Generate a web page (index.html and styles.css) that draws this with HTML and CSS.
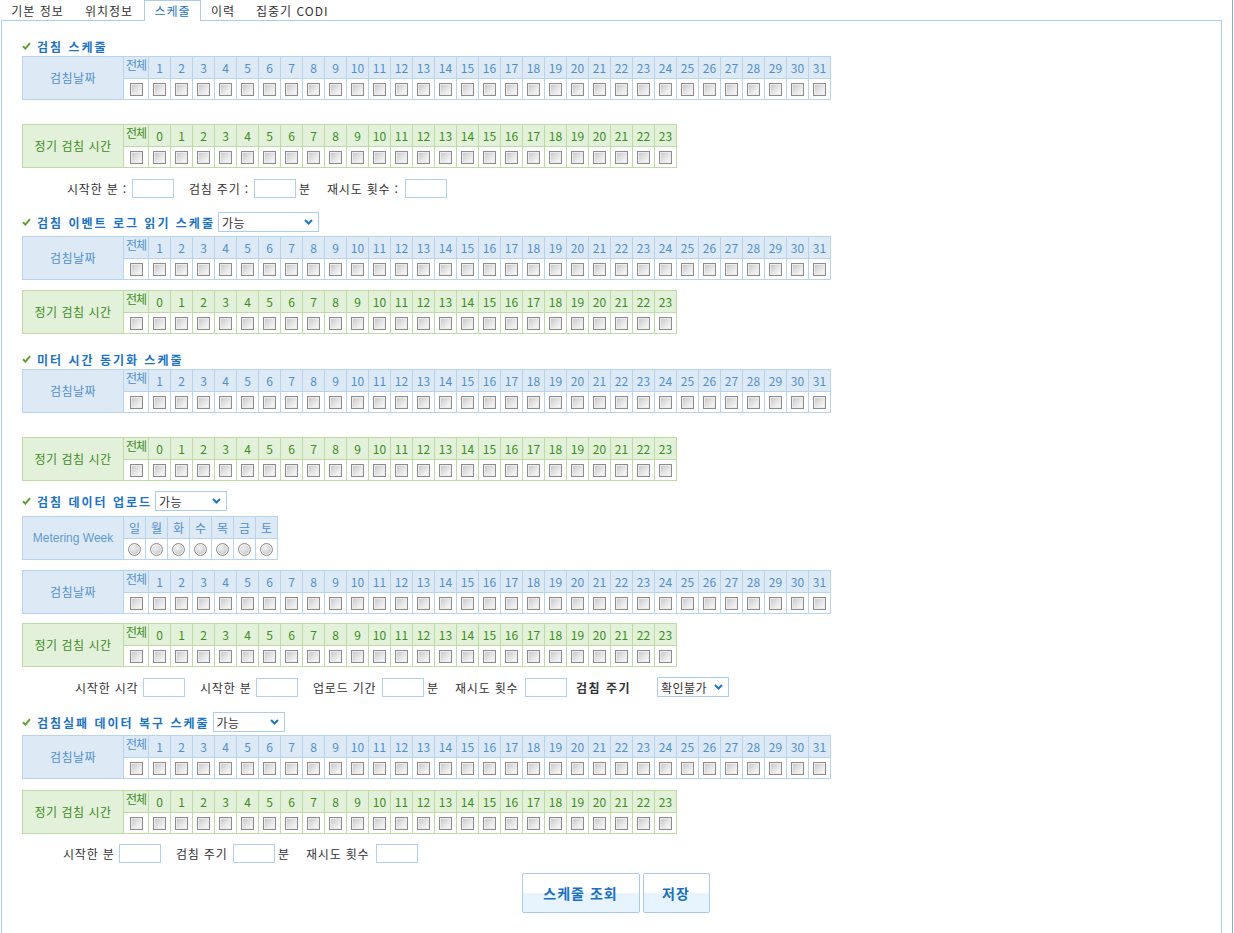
FILE: index.html
```html
<!DOCTYPE html>
<html lang="ko">
<head>
<meta charset="utf-8">
<title>스케줄</title>
<link rel="stylesheet" href="styles.css">
</head>
<body>
<div class="frame">
  <div class="tabs">
    <span class="tab t1">기본 정보</span>
    <span class="tab t2">위치정보</span>
    <span class="tab t3 active">스케줄</span>
    <span class="tab t4">이력</span>
    <span class="tab t5">집중기 CODI</span>
  </div>
  <div class="panel">

    <!-- 1 -->
    <div class="sec-title first"><svg class="chk" width="9" height="8" viewBox="0 0 9 8"><path d="M1 4.2 L3.4 6.6 L8 1.2" fill="none" stroke="#5f9e2c" stroke-width="2"/></svg><span>검침 스케줄</span></div>
    <table class="grid blue">
      <tr><th class="lab" rowspan="2">검침날짜</th><th class="all">전체</th><th>1</th><th>2</th><th>3</th><th>4</th><th>5</th><th>6</th><th>7</th><th>8</th><th>9</th><th>10</th><th>11</th><th>12</th><th>13</th><th>14</th><th>15</th><th>16</th><th>17</th><th>18</th><th>19</th><th>20</th><th>21</th><th>22</th><th>23</th><th>24</th><th>25</th><th>26</th><th>27</th><th>28</th><th>29</th><th>30</th><th>31</th></tr>
      <tr><td><input type="checkbox"></td><td><input type="checkbox"></td><td><input type="checkbox"></td><td><input type="checkbox"></td><td><input type="checkbox"></td><td><input type="checkbox"></td><td><input type="checkbox"></td><td><input type="checkbox"></td><td><input type="checkbox"></td><td><input type="checkbox"></td><td><input type="checkbox"></td><td><input type="checkbox"></td><td><input type="checkbox"></td><td><input type="checkbox"></td><td><input type="checkbox"></td><td><input type="checkbox"></td><td><input type="checkbox"></td><td><input type="checkbox"></td><td><input type="checkbox"></td><td><input type="checkbox"></td><td><input type="checkbox"></td><td><input type="checkbox"></td><td><input type="checkbox"></td><td><input type="checkbox"></td><td><input type="checkbox"></td><td><input type="checkbox"></td><td><input type="checkbox"></td><td><input type="checkbox"></td><td><input type="checkbox"></td><td><input type="checkbox"></td><td><input type="checkbox"></td><td><input type="checkbox"></td></tr>
    </table>
    <table class="grid green gap-24">
      <tr><th class="lab" rowspan="2">정기 검침 시간</th><th class="all">전체</th><th>0</th><th>1</th><th>2</th><th>3</th><th>4</th><th>5</th><th>6</th><th>7</th><th>8</th><th>9</th><th>10</th><th>11</th><th>12</th><th>13</th><th>14</th><th>15</th><th>16</th><th>17</th><th>18</th><th>19</th><th>20</th><th>21</th><th>22</th><th>23</th></tr>
      <tr><td><input type="checkbox"></td><td><input type="checkbox"></td><td><input type="checkbox"></td><td><input type="checkbox"></td><td><input type="checkbox"></td><td><input type="checkbox"></td><td><input type="checkbox"></td><td><input type="checkbox"></td><td><input type="checkbox"></td><td><input type="checkbox"></td><td><input type="checkbox"></td><td><input type="checkbox"></td><td><input type="checkbox"></td><td><input type="checkbox"></td><td><input type="checkbox"></td><td><input type="checkbox"></td><td><input type="checkbox"></td><td><input type="checkbox"></td><td><input type="checkbox"></td><td><input type="checkbox"></td><td><input type="checkbox"></td><td><input type="checkbox"></td><td><input type="checkbox"></td><td><input type="checkbox"></td><td><input type="checkbox"></td></tr>
    </table>
    <div class="fields f1 gap-10">
      <span class="lbl w65">시작한 분 :</span><input class="txt" type="text">
      <span class="lbl w65 sp">검침 주기 :</span><input class="txt" type="text"><span class="unit">분</span>
      <span class="lbl w78 sp">재시도 횟수 :</span><input class="txt" type="text">
    </div>

    <!-- 2 -->
    <div class="sec-title gap-14"><svg class="chk" width="9" height="8" viewBox="0 0 9 8"><path d="M1 4.2 L3.4 6.6 L8 1.2" fill="none" stroke="#5f9e2c" stroke-width="2"/></svg><span>검침 이벤트 로그 읽기 스케줄</span><span class="sel w101"><span>가능</span><svg width="9" height="6" viewBox="0 0 9 6"><path d="M1 1 L4.5 4.5 L8 1" fill="none" stroke="#1d74c8" stroke-width="2"/></svg></span></div>
    <table class="grid blue gap-4">
      <tr><th class="lab" rowspan="2">검침날짜</th><th class="all">전체</th><th>1</th><th>2</th><th>3</th><th>4</th><th>5</th><th>6</th><th>7</th><th>8</th><th>9</th><th>10</th><th>11</th><th>12</th><th>13</th><th>14</th><th>15</th><th>16</th><th>17</th><th>18</th><th>19</th><th>20</th><th>21</th><th>22</th><th>23</th><th>24</th><th>25</th><th>26</th><th>27</th><th>28</th><th>29</th><th>30</th><th>31</th></tr>
      <tr><td><input type="checkbox"></td><td><input type="checkbox"></td><td><input type="checkbox"></td><td><input type="checkbox"></td><td><input type="checkbox"></td><td><input type="checkbox"></td><td><input type="checkbox"></td><td><input type="checkbox"></td><td><input type="checkbox"></td><td><input type="checkbox"></td><td><input type="checkbox"></td><td><input type="checkbox"></td><td><input type="checkbox"></td><td><input type="checkbox"></td><td><input type="checkbox"></td><td><input type="checkbox"></td><td><input type="checkbox"></td><td><input type="checkbox"></td><td><input type="checkbox"></td><td><input type="checkbox"></td><td><input type="checkbox"></td><td><input type="checkbox"></td><td><input type="checkbox"></td><td><input type="checkbox"></td><td><input type="checkbox"></td><td><input type="checkbox"></td><td><input type="checkbox"></td><td><input type="checkbox"></td><td><input type="checkbox"></td><td><input type="checkbox"></td><td><input type="checkbox"></td><td><input type="checkbox"></td></tr>
    </table>
    <table class="grid green gap-10">
      <tr><th class="lab" rowspan="2">정기 검침 시간</th><th class="all">전체</th><th>0</th><th>1</th><th>2</th><th>3</th><th>4</th><th>5</th><th>6</th><th>7</th><th>8</th><th>9</th><th>10</th><th>11</th><th>12</th><th>13</th><th>14</th><th>15</th><th>16</th><th>17</th><th>18</th><th>19</th><th>20</th><th>21</th><th>22</th><th>23</th></tr>
      <tr><td><input type="checkbox"></td><td><input type="checkbox"></td><td><input type="checkbox"></td><td><input type="checkbox"></td><td><input type="checkbox"></td><td><input type="checkbox"></td><td><input type="checkbox"></td><td><input type="checkbox"></td><td><input type="checkbox"></td><td><input type="checkbox"></td><td><input type="checkbox"></td><td><input type="checkbox"></td><td><input type="checkbox"></td><td><input type="checkbox"></td><td><input type="checkbox"></td><td><input type="checkbox"></td><td><input type="checkbox"></td><td><input type="checkbox"></td><td><input type="checkbox"></td><td><input type="checkbox"></td><td><input type="checkbox"></td><td><input type="checkbox"></td><td><input type="checkbox"></td><td><input type="checkbox"></td><td><input type="checkbox"></td></tr>
    </table>

    <!-- 3 -->
    <div class="sec-title gap-15"><svg class="chk" width="9" height="8" viewBox="0 0 9 8"><path d="M1 4.2 L3.4 6.6 L8 1.2" fill="none" stroke="#5f9e2c" stroke-width="2"/></svg><span>미터 시간 동기화 스케줄</span></div>
    <table class="grid blue">
      <tr><th class="lab" rowspan="2">검침날짜</th><th class="all">전체</th><th>1</th><th>2</th><th>3</th><th>4</th><th>5</th><th>6</th><th>7</th><th>8</th><th>9</th><th>10</th><th>11</th><th>12</th><th>13</th><th>14</th><th>15</th><th>16</th><th>17</th><th>18</th><th>19</th><th>20</th><th>21</th><th>22</th><th>23</th><th>24</th><th>25</th><th>26</th><th>27</th><th>28</th><th>29</th><th>30</th><th>31</th></tr>
      <tr><td><input type="checkbox"></td><td><input type="checkbox"></td><td><input type="checkbox"></td><td><input type="checkbox"></td><td><input type="checkbox"></td><td><input type="checkbox"></td><td><input type="checkbox"></td><td><input type="checkbox"></td><td><input type="checkbox"></td><td><input type="checkbox"></td><td><input type="checkbox"></td><td><input type="checkbox"></td><td><input type="checkbox"></td><td><input type="checkbox"></td><td><input type="checkbox"></td><td><input type="checkbox"></td><td><input type="checkbox"></td><td><input type="checkbox"></td><td><input type="checkbox"></td><td><input type="checkbox"></td><td><input type="checkbox"></td><td><input type="checkbox"></td><td><input type="checkbox"></td><td><input type="checkbox"></td><td><input type="checkbox"></td><td><input type="checkbox"></td><td><input type="checkbox"></td><td><input type="checkbox"></td><td><input type="checkbox"></td><td><input type="checkbox"></td><td><input type="checkbox"></td><td><input type="checkbox"></td></tr>
    </table>
    <table class="grid green gap-24">
      <tr><th class="lab" rowspan="2">정기 검침 시간</th><th class="all">전체</th><th>0</th><th>1</th><th>2</th><th>3</th><th>4</th><th>5</th><th>6</th><th>7</th><th>8</th><th>9</th><th>10</th><th>11</th><th>12</th><th>13</th><th>14</th><th>15</th><th>16</th><th>17</th><th>18</th><th>19</th><th>20</th><th>21</th><th>22</th><th>23</th></tr>
      <tr><td><input type="checkbox"></td><td><input type="checkbox"></td><td><input type="checkbox"></td><td><input type="checkbox"></td><td><input type="checkbox"></td><td><input type="checkbox"></td><td><input type="checkbox"></td><td><input type="checkbox"></td><td><input type="checkbox"></td><td><input type="checkbox"></td><td><input type="checkbox"></td><td><input type="checkbox"></td><td><input type="checkbox"></td><td><input type="checkbox"></td><td><input type="checkbox"></td><td><input type="checkbox"></td><td><input type="checkbox"></td><td><input type="checkbox"></td><td><input type="checkbox"></td><td><input type="checkbox"></td><td><input type="checkbox"></td><td><input type="checkbox"></td><td><input type="checkbox"></td><td><input type="checkbox"></td><td><input type="checkbox"></td></tr>
    </table>

    <!-- 4 -->
    <div class="sec-title gap-10"><svg class="chk" width="9" height="8" viewBox="0 0 9 8"><path d="M1 4.2 L3.4 6.6 L8 1.2" fill="none" stroke="#5f9e2c" stroke-width="2"/></svg><span>검침 데이터 업로드</span><span class="sel w72"><span>가능</span><svg width="9" height="6" viewBox="0 0 9 6"><path d="M1 1 L4.5 4.5 L8 1" fill="none" stroke="#1d74c8" stroke-width="2"/></svg></span></div>
    <table class="grid blue week gap-5">
      <tr><th class="lab wk" rowspan="2">Metering Week</th><th>일</th><th>월</th><th>화</th><th>수</th><th>목</th><th>금</th><th>토</th></tr>
      <tr><td><input type="radio" name="wk"></td><td><input type="radio" name="wk"></td><td><input type="radio" name="wk"></td><td><input type="radio" name="wk"></td><td><input type="radio" name="wk"></td><td><input type="radio" name="wk"></td><td><input type="radio" name="wk"></td></tr>
    </table>
    <table class="grid blue gap-10">
      <tr><th class="lab" rowspan="2">검침날짜</th><th class="all">전체</th><th>1</th><th>2</th><th>3</th><th>4</th><th>5</th><th>6</th><th>7</th><th>8</th><th>9</th><th>10</th><th>11</th><th>12</th><th>13</th><th>14</th><th>15</th><th>16</th><th>17</th><th>18</th><th>19</th><th>20</th><th>21</th><th>22</th><th>23</th><th>24</th><th>25</th><th>26</th><th>27</th><th>28</th><th>29</th><th>30</th><th>31</th></tr>
      <tr><td><input type="checkbox"></td><td><input type="checkbox"></td><td><input type="checkbox"></td><td><input type="checkbox"></td><td><input type="checkbox"></td><td><input type="checkbox"></td><td><input type="checkbox"></td><td><input type="checkbox"></td><td><input type="checkbox"></td><td><input type="checkbox"></td><td><input type="checkbox"></td><td><input type="checkbox"></td><td><input type="checkbox"></td><td><input type="checkbox"></td><td><input type="checkbox"></td><td><input type="checkbox"></td><td><input type="checkbox"></td><td><input type="checkbox"></td><td><input type="checkbox"></td><td><input type="checkbox"></td><td><input type="checkbox"></td><td><input type="checkbox"></td><td><input type="checkbox"></td><td><input type="checkbox"></td><td><input type="checkbox"></td><td><input type="checkbox"></td><td><input type="checkbox"></td><td><input type="checkbox"></td><td><input type="checkbox"></td><td><input type="checkbox"></td><td><input type="checkbox"></td><td><input type="checkbox"></td></tr>
    </table>
    <table class="grid green gap-9">
      <tr><th class="lab" rowspan="2">정기 검침 시간</th><th class="all">전체</th><th>0</th><th>1</th><th>2</th><th>3</th><th>4</th><th>5</th><th>6</th><th>7</th><th>8</th><th>9</th><th>10</th><th>11</th><th>12</th><th>13</th><th>14</th><th>15</th><th>16</th><th>17</th><th>18</th><th>19</th><th>20</th><th>21</th><th>22</th><th>23</th></tr>
      <tr><td><input type="checkbox"></td><td><input type="checkbox"></td><td><input type="checkbox"></td><td><input type="checkbox"></td><td><input type="checkbox"></td><td><input type="checkbox"></td><td><input type="checkbox"></td><td><input type="checkbox"></td><td><input type="checkbox"></td><td><input type="checkbox"></td><td><input type="checkbox"></td><td><input type="checkbox"></td><td><input type="checkbox"></td><td><input type="checkbox"></td><td><input type="checkbox"></td><td><input type="checkbox"></td><td><input type="checkbox"></td><td><input type="checkbox"></td><td><input type="checkbox"></td><td><input type="checkbox"></td><td><input type="checkbox"></td><td><input type="checkbox"></td><td><input type="checkbox"></td><td><input type="checkbox"></td><td><input type="checkbox"></td></tr>
    </table>
    <div class="fields f4 gap-10">
      <span class="lbl w68">시작한 시각</span><input class="txt" type="text">
      <span class="lbl w56 sp">시작한 분</span><input class="txt" type="text">
      <span class="lbl w69 sp">업로드 기간</span><input class="txt" type="text"><span class="unit">분</span>
      <span class="lbl w70 sp">재시도 횟수</span><input class="txt" type="text">
      <span class="lbl w81 sp-s strong">검침 주기</span><span class="sel w72"><span>확인불가</span><svg width="9" height="6" viewBox="0 0 9 6"><path d="M1 1 L4.5 4.5 L8 1" fill="none" stroke="#1d74c8" stroke-width="2"/></svg></span>
    </div>

    <!-- 5 -->
    <div class="sec-title gap-15"><svg class="chk" width="9" height="8" viewBox="0 0 9 8"><path d="M1 4.2 L3.4 6.6 L8 1.2" fill="none" stroke="#5f9e2c" stroke-width="2"/></svg><span>검침실패 데이터 복구 스케줄</span><span class="sel w72"><span>가능</span><svg width="9" height="6" viewBox="0 0 9 6"><path d="M1 1 L4.5 4.5 L8 1" fill="none" stroke="#1d74c8" stroke-width="2"/></svg></span></div>
    <table class="grid blue gap-3">
      <tr><th class="lab" rowspan="2">검침날짜</th><th class="all">전체</th><th>1</th><th>2</th><th>3</th><th>4</th><th>5</th><th>6</th><th>7</th><th>8</th><th>9</th><th>10</th><th>11</th><th>12</th><th>13</th><th>14</th><th>15</th><th>16</th><th>17</th><th>18</th><th>19</th><th>20</th><th>21</th><th>22</th><th>23</th><th>24</th><th>25</th><th>26</th><th>27</th><th>28</th><th>29</th><th>30</th><th>31</th></tr>
      <tr><td><input type="checkbox"></td><td><input type="checkbox"></td><td><input type="checkbox"></td><td><input type="checkbox"></td><td><input type="checkbox"></td><td><input type="checkbox"></td><td><input type="checkbox"></td><td><input type="checkbox"></td><td><input type="checkbox"></td><td><input type="checkbox"></td><td><input type="checkbox"></td><td><input type="checkbox"></td><td><input type="checkbox"></td><td><input type="checkbox"></td><td><input type="checkbox"></td><td><input type="checkbox"></td><td><input type="checkbox"></td><td><input type="checkbox"></td><td><input type="checkbox"></td><td><input type="checkbox"></td><td><input type="checkbox"></td><td><input type="checkbox"></td><td><input type="checkbox"></td><td><input type="checkbox"></td><td><input type="checkbox"></td><td><input type="checkbox"></td><td><input type="checkbox"></td><td><input type="checkbox"></td><td><input type="checkbox"></td><td><input type="checkbox"></td><td><input type="checkbox"></td><td><input type="checkbox"></td></tr>
    </table>
    <table class="grid green gap-11">
      <tr><th class="lab" rowspan="2">정기 검침 시간</th><th class="all">전체</th><th>0</th><th>1</th><th>2</th><th>3</th><th>4</th><th>5</th><th>6</th><th>7</th><th>8</th><th>9</th><th>10</th><th>11</th><th>12</th><th>13</th><th>14</th><th>15</th><th>16</th><th>17</th><th>18</th><th>19</th><th>20</th><th>21</th><th>22</th><th>23</th></tr>
      <tr><td><input type="checkbox"></td><td><input type="checkbox"></td><td><input type="checkbox"></td><td><input type="checkbox"></td><td><input type="checkbox"></td><td><input type="checkbox"></td><td><input type="checkbox"></td><td><input type="checkbox"></td><td><input type="checkbox"></td><td><input type="checkbox"></td><td><input type="checkbox"></td><td><input type="checkbox"></td><td><input type="checkbox"></td><td><input type="checkbox"></td><td><input type="checkbox"></td><td><input type="checkbox"></td><td><input type="checkbox"></td><td><input type="checkbox"></td><td><input type="checkbox"></td><td><input type="checkbox"></td><td><input type="checkbox"></td><td><input type="checkbox"></td><td><input type="checkbox"></td><td><input type="checkbox"></td><td><input type="checkbox"></td></tr>
    </table>
    <div class="fields f5 gap-9">
      <span class="lbl w56">시작한 분</span><input class="txt" type="text">
      <span class="lbl w57 sp">검침 주기</span><input class="txt" type="text"><span class="unit">분</span>
      <span class="lbl w70 sp">재시도 횟수</span><input class="txt" type="text">
    </div>

    <div class="buttons gap-10">
      <button class="btn wide" type="button">스케줄 조회</button>
      <button class="btn" type="button">저장</button>
    </div>
  </div>
</div>
</body>
</html>
```
FILE: styles.css
```css
html, body {
  margin: 0;
  padding: 0;
  background: #fff;
}
body {
  font-family: "Noto Sans CJK KR", "Liberation Sans", sans-serif;
  font-size: 12px;
  color: #333;
  overflow: hidden;
}
.frame {
  width: 1232px;
  height: 933px;
  border-right: 1px solid #7db2e6;
}

/* tabs */
.tabs {
  display: flex;
  height: 20px;
  padding-left: 1px;
}
.tab {
  box-sizing: border-box;
  height: 20px;
  line-height: 21px;
  text-align: center;
  white-space: nowrap;
  color: #333;
  letter-spacing: 1px;
}
.tab.t1 { width: 73px; }
.tab.t2 { width: 70px; }
.tab.t3 { width: 57px; }
.tab.t4 { width: 44px; }
.tab.t5 { padding-left: 11px; text-align: left; }
.tab.active {
  height: 21px;
  margin-bottom: -1px;
  border: 1px solid #a9cdea;
  border-bottom: none;
  background: #fff;
  color: #1c72c4;
  line-height: 20px;
  position: relative;
  z-index: 1;
}

/* panel */
.panel {
  margin-left: 1px;
  width: 1221px;
  height: 1000px;
  box-sizing: border-box;
  border: 1px solid #a9cdea;
  padding: 15px 20px 0 20px;
}

.sec-title {
  display: flex;
  align-items: center;
  height: 20px;
  font-weight: bold;
  color: #1c72c4;
  white-space: nowrap;
}
.sec-title > span:not(.sel) {
  letter-spacing: 2px;
}
.sec-title .chk {
  margin-right: 6px;
  flex: none;
}
.sec-title .sel {
  margin-left: 3px;
  font-weight: normal;
}

/* fake selects */
.sel {
  display: inline-flex;
  align-items: center;
  justify-content: space-between;
  height: 20px;
  box-sizing: border-box;
  border: 1px solid #a9cdea;
  background: #fff;
  padding: 0 5px 0 3px;
  color: #333;
  font-weight: normal;
  letter-spacing: 0.5px;
}
.sel.w101 { width: 101px; }
.sel.w72 { width: 72px; }

/* grids */
.grid {
  border-collapse: separate;
  border-spacing: 0;
  table-layout: fixed;
  border-top: 1px solid;
  border-left: 1px solid;
}
.grid th, .grid td {
  box-sizing: border-box;
  padding: 0;
  width: 22px;
  border-right: 1px solid;
  border-bottom: 1px solid;
  text-align: center;
  font-weight: normal;
  white-space: nowrap;
  overflow: hidden;
}
.grid th {
  height: 22px;
  line-height: 18px;
  vertical-align: middle;
}
.grid td {
  height: 21px;
  background: #fff;
  vertical-align: middle;
}
.grid th.lab {
  width: 101px;
  line-height: 16px;
  letter-spacing: 0.5px;
}
.grid th.all {
  width: 25px;
  letter-spacing: -1px;
  vertical-align: top;
  line-height: 16px;
}
.blue { border-color: #b8d4ec; }
.blue th, .blue td { border-color: #b8d4ec; }
.blue th { background: #dde9f5; color: #4f90cc; }
.green { border-color: #bcdca4; }
.green th, .green td { border-color: #bcdca4; }
.green th { background: #e3f0da; color: #3b8d1c; }
.grid th.wk {
  font-family: "Liberation Sans", "Noto Sans CJK KR", sans-serif;
  color: #5f9bd1;
  letter-spacing: 0;
}

input[type="checkbox"] {
  appearance: none;
  -webkit-appearance: none;
  display: block;
  margin: 1px auto 0;
  width: 13px;
  height: 13px;
  box-sizing: border-box;
  border: 1px solid #8c8c8c;
  box-shadow: inset 0 0 0 1px #ececec;
  background: linear-gradient(135deg, #c4c4c4 0%, #e6e6e6 55%, #fdfdfd 100%);
}
input[type="radio"] {
  appearance: none;
  -webkit-appearance: none;
  display: block;
  margin: 1px auto 0;
  width: 13px;
  height: 13px;
  box-sizing: border-box;
  border-radius: 50%;
  border: 1px solid #8c8c8c;
  box-shadow: inset 0 0 0 1px #f2f2f2;
  background: radial-gradient(circle at 40% 35%, #f4f4f4 0%, #cfcfcf 60%, #b8b8b8 100%);
}

/* spacing between blocks */
.first { margin-top: 0; }
.gap-3 { margin-top: 3px; }
.gap-4 { margin-top: 4px; }
.gap-5 { margin-top: 5px; }
.gap-9 { margin-top: 9px; }
.gap-10 { margin-top: 10px; }
.gap-11 { margin-top: 11px; }
.gap-14 { margin-top: 14px; }
.gap-15 { margin-top: 15px; }
.gap-24 { margin-top: 24px; }

/* field rows */
.fields {
  display: flex;
  align-items: center;
  height: 20px;
  white-space: nowrap;
}
.fields.f1 { padding-left: 45px; }
.fields.f4 { padding-left: 53px; }
.fields.f5 { padding-left: 41px; }
.lbl {
  display: inline-block;
  letter-spacing: 0.8px;
}
.lbl.sp { margin-left: 15px; }
.lbl.sp-s { margin-left: 9px; }
.lbl.strong { font-weight: bold; color: #333; letter-spacing: 1.5px; }
.w56 { width: 56px; }
.w57 { width: 57px; }
.w65 { width: 65px; }
.w68 { width: 68px; }
.w69 { width: 69px; }
.w70 { width: 70px; }
.w78 { width: 78px; }
.w81 { width: 81px; }
.txt {
  width: 42px;
  height: 19px;
  box-sizing: border-box;
  margin: 0;
  border: 1px solid #b0d0ee;
  padding: 0 2px;
  font: inherit;
}
.unit {
  display: inline-block;
  width: 12px;
  margin-left: 3px;
}
.fields .unit + .lbl.sp { margin-left: 16px; }

/* buttons */
.buttons {
  display: flex;
  justify-content: center;
  gap: 3px;
  padding-left: 8px;
}
.btn {
  height: 40px;
  width: 67px;
  box-sizing: border-box;
  border: 1px solid #a8c8ec;
  border-radius: 2px;
  background: linear-gradient(#ffffff 0%, #ffffff 49%, #e8f4fd 50%, #e8f4fd 100%);
  font-family: inherit;
  font-size: 14px;
  font-weight: bold;
  color: #1a6fc0;
  padding: 0;
  letter-spacing: 1px;
}
.btn.wide { width: 118px; }
```
